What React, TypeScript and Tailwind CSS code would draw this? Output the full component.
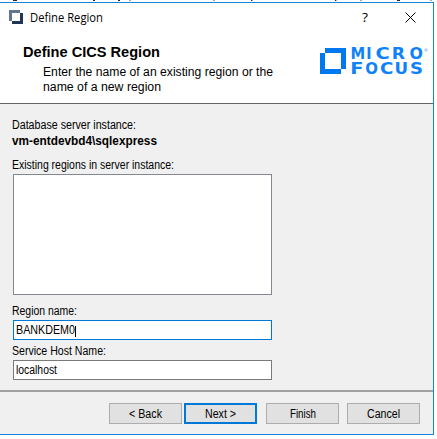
import type { ReactNode } from 'react';

function T({ w, className = '', children }: { w: number; className?: string; children: string }) {
  return (
    <svg width={w} height="16" className={`block shrink-0 overflow-visible ${className}`} fill="currentColor">
      <text x="0" y="12" textLength={w} lengthAdjust="spacingAndGlyphs">{children}</text>
    </svg>
  );
}

function Button({ children, primary = false, className = '' }: { children: ReactNode; primary?: boolean; className?: string }) {
  return (
    <button
      className={`flex h-[21px] w-[73px] shrink-0 items-center justify-center bg-[#e1e1e1] pt-px ${primary ? 'border-2 border-[#0078d7]' : 'border border-[#adadad]'} ${className}`}
    >
      {children}
    </button>
  );
}

type Glyph = [string, number, number];

const topWord: Glyph[] = [['M', 30.6, 14.7], ['I', 46.3, 5.3], ['C', 55.4, 14.2], ['R', 71.7, 13.3], ['O', 89.5, 13.4]];
const bottomWord: Glyph[] = [['F', 30.3, 13.2], ['O', 45.2, 12.7], ['C', 59.9, 13.4], ['U', 74.5, 13.6], ['S', 90, 13]];

function Word({ y, glyphs }: { y: number; glyphs: Glyph[] }) {
  return (
    <text y={y}>
      {glyphs.map(([c, x, w]) => (
        <tspan key={c} x={x} textLength={w} lengthAdjust="spacingAndGlyphs">{c}</tspan>
      ))}
    </text>
  );
}

function Logo() {
  return (
    <svg width="110" height="30" viewBox="0 0 110 30" className="mt-[3px] block shrink-0 overflow-visible">
      <path fill="#0078ef" fillRule="evenodd" d="M5 1H26V22H21V27H0V6H5ZM5 6V22H21V6Z" />
      <g fill="#0f82fa" fontFamily="DejaVu Sans" fontWeight="700" fontSize="15">
        <Word y={12} glyphs={topWord} />
        <Word y={27} glyphs={bottomWord} />
      </g>
      <circle cx="106" cy="3" r="1.2" fill="none" stroke="#79b8fb" strokeWidth=".8" />
    </svg>
  );
}

// Descender tips of the line of text just above the window.
function TextAbove() {
  return (
    <svg width="437" height="2" className="block" shapeRendering="crispEdges">
      <path fill="#e0944f" d="M129 0h1v1h-1zM213 0h1v1h-1zM360 0h1v1h-1zM430 0h1v1h-1z" />
      <path fill="#7fb8e8" d="M130 0h1v1h-1zM214 0h1v1h-1zM252 0h1v1h-1zM336 0h1v1h-1zM361 0h1v1h-1zM431 0h1v1h-1z" />
      <path fill="#3a2118" d="M13 0h4v1h-4zM93 0h2v1h-2zM118 0h2v1h-2zM251 0h1v1h-1zM335 0h1v1h-1zM397 0h3v1h-3z" />
    </svg>
  );
}

export default function App() {
  return (
    <div className="h-[439px] w-[437px] overflow-hidden bg-white font-['Liberation_Sans',sans-serif] text-[12px] text-black">
      <TextAbove />
      <main className="flex h-[433px] w-[434px] flex-col border-y border-r border-[#1883d7] bg-[#f0f0f0]">
        <header className="h-[101px] shrink-0 border-b border-[#646464] bg-white">
          <div className="flex h-[30px] items-start pl-[9px]">
            <svg width="14" height="14" viewBox="0 0 14 14" className="mt-[7px] shrink-0">
              <path fill="#60758e" d="M0 0H11V3H3V11H0Z" />
              <path fill="#1f3654" d="M11 3H14V14H3V11H11Z" />
            </svg>
            <T w={73} className="mt-[7px] ml-[7px] font-['Open_Sans',sans-serif]">Define Region</T>
            <T w={6} className="mt-[7px] ml-[259px] font-['Open_Sans',sans-serif] text-[13px]">?</T>
            <svg width="11" height="11" viewBox="0 0 11 11" className="mt-[9px] ml-[37px]" stroke="#000" fill="none">
              <path d="M.5 .5L10.5 10.5M10.5 .5L.5 10.5" />
            </svg>
          </div>
          <div className="flex pt-[11px] pl-[23px]">
            <div className="w-[297px] shrink-0 pt-px">
              <T w={137} className="text-[14px] font-bold">Define CICS Region</T>
              <T w={230} className="mt-[3px] ml-5">Enter the name of an existing region or the</T>
              <T w={118} className="mt-[-1px] ml-5">name of a new region</T>
            </div>
            <Logo />
          </div>
        </header>
        <section className="flex h-[286px] shrink-0 flex-col pl-3">
          <T w={124} className="mt-[13px]">Database server instance:</T>
          <T w={145} className="font-bold">vm-entdevbd4\sqlexpress</T>
          <T w={162} className="mt-2">Existing regions in server instance:</T>
          <div className="mt-px ml-px h-[121px] w-[259px] shrink-0 border border-[#828790] bg-white" />
          <T w={65} className="mt-2">Region name:</T>
          <div className="mt-px ml-px flex h-5 w-[259px] shrink-0 border border-[#0078d7] bg-white pt-px pl-[2px]">
            <T w={59}>BANKDEM0</T>
            <div className="mt-1 h-[11px] w-px bg-black" />
          </div>
          <T w={94} className="mt-[3px]">Service Host Name:</T>
          <div className="mt-px ml-px h-5 w-[259px] shrink-0 border border-[#7a7a7a] bg-white pt-px pl-[2px]">
            <T w={41}>localhost</T>
          </div>
        </section>
        <footer className="flex grow border-t-2 border-[#a0a0a0] pt-[11px] pl-[109px]">
          <Button><T w={33}>{'< Back'}</T></Button>
          <Button primary className="ml-[2px]"><T w={31}>{'Next >'}</T></Button>
          <Button className="ml-[9px]"><T w={26}>Finish</T></Button>
          <Button className="ml-2"><T w={33}>Cancel</T></Button>
        </footer>
      </main>
    </div>
  );
}
